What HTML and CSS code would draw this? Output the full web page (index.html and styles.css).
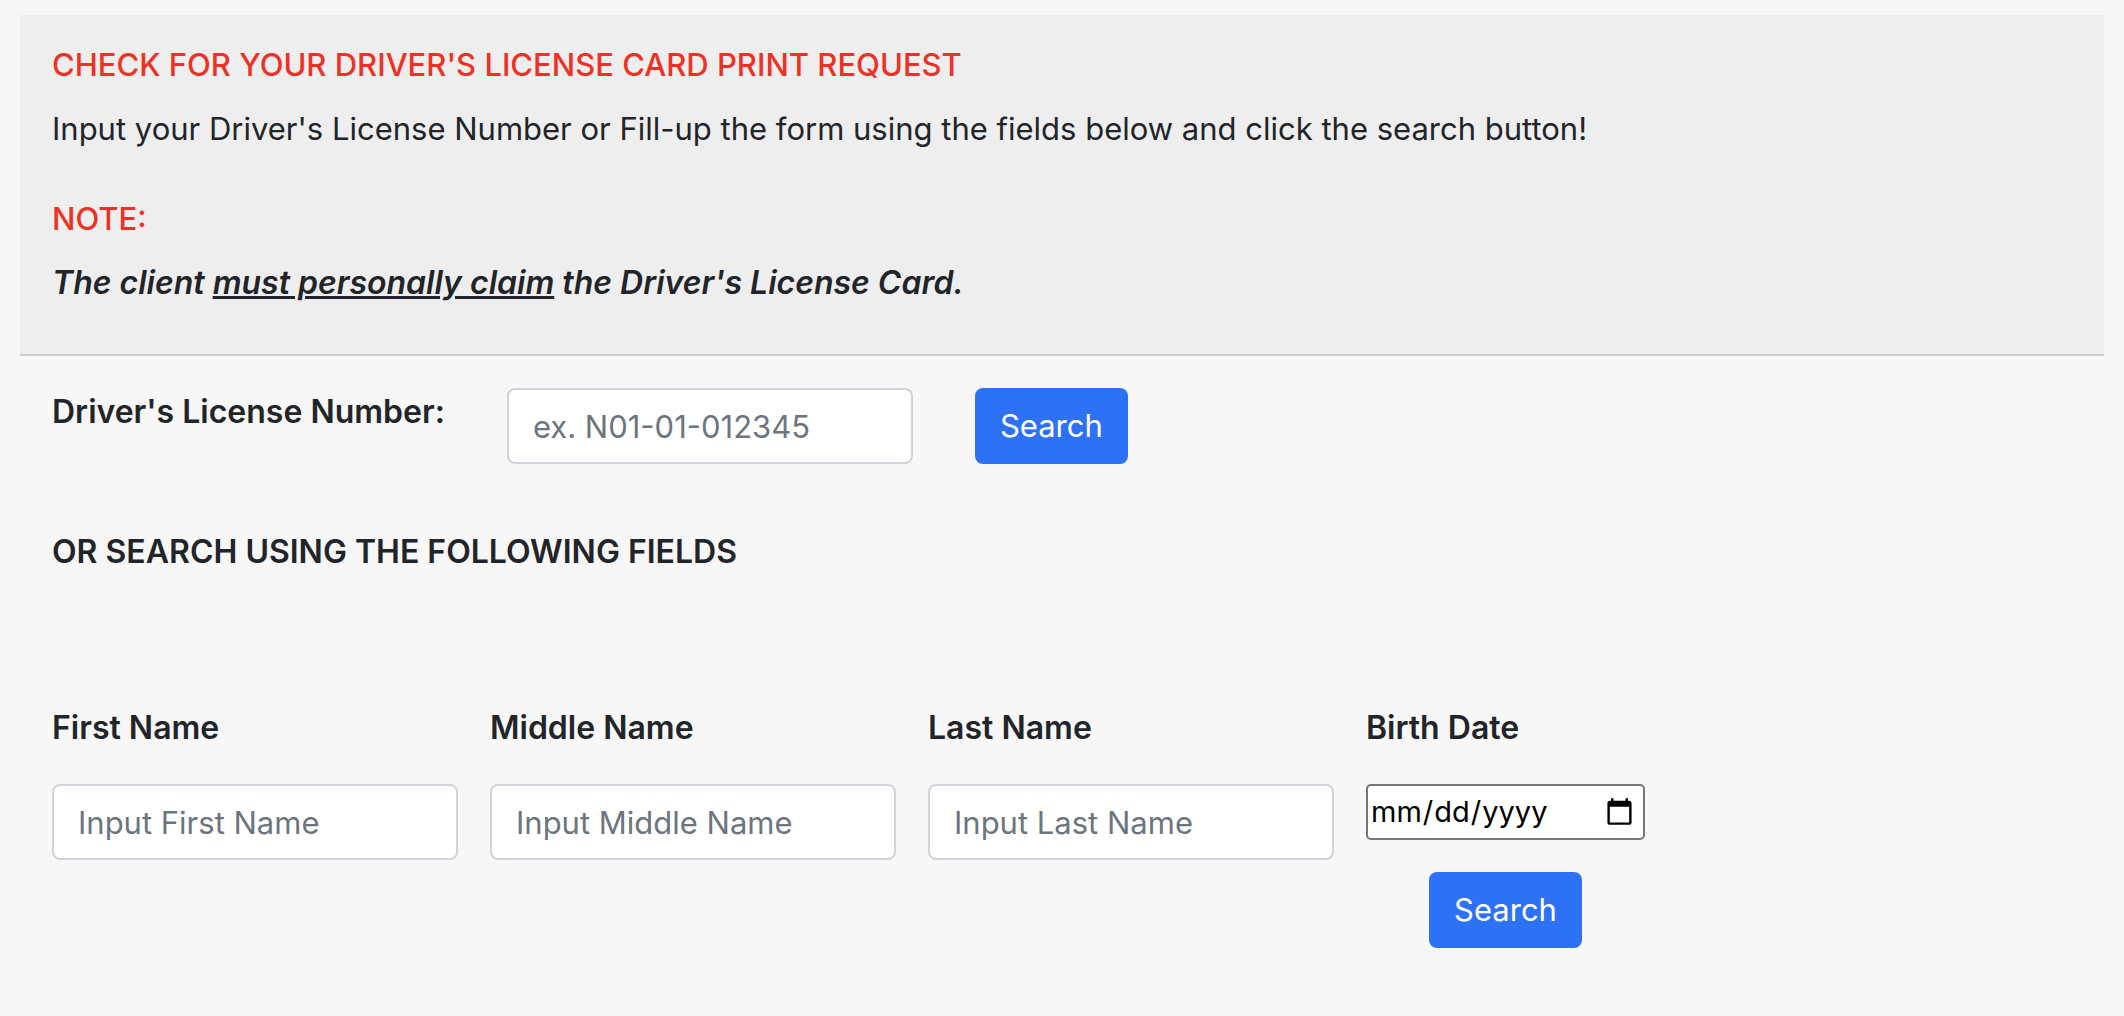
FILE: index.html
```html
<!DOCTYPE html>
<html lang="en">
<head>
    <meta charset="UTF-8">
    <meta name="viewport" content="width=device-width, initial-scale=1.0">
    <title>Driver's License Card Print Request</title>
    <link rel="stylesheet" href="styles.css">
</head>
<body>
    <div class="notice">
        <h1>CHECK FOR YOUR DRIVER'S LICENSE CARD PRINT REQUEST</h1>
        <p>Input your Driver's License Number or Fill-up the form using the fields below and click the search button!</p>
        <h2>NOTE:</h2>
        <p class="claim">The client <u>must personally claim</u> the Driver's License Card.</p>
    </div>

    <form class="license-form">
        <label for="licenseNumber">Driver's License Number:</label>
        <input type="text" class="text-input" id="licenseNumber" name="licenseNumber" placeholder="ex. N01-01-012345">
        <button type="submit">Search</button>
    </form>

    <h2 class="or-title">OR SEARCH USING THE FOLLOWING FIELDS</h2>

    <form class="name-form">
        <div class="field">
            <label for="firstName">First Name</label>
            <input type="text" class="text-input" id="firstName" name="firstName" placeholder="Input First Name">
        </div>
        <div class="field">
            <label for="middleName">Middle Name</label>
            <input type="text" class="text-input" id="middleName" name="middleName" placeholder="Input Middle Name">
        </div>
        <div class="field">
            <label for="lastName">Last Name</label>
            <input type="text" class="text-input" id="lastName" name="lastName" placeholder="Input Last Name">
        </div>
        <div class="field">
            <label for="birthDate">Birth Date</label>
            <input type="date" class="date-input" id="birthDate" name="birthDate">
            <button type="submit">Search</button>
        </div>
    </form>
</body>
</html>
```

FILE: styles.css
```css
* {
    box-sizing: border-box;
}
body {
    margin: 0;
    padding: 15px 20px 32px;
    background-color: #f7f7f7;
    color: #212529;
    font-family: Inter, "Liberation Sans", sans-serif;
    font-size: 31px;
    line-height: 48px;
}
h1, h2, p {
    margin: 0 0 16px;
    font-size: 31px;
}
.notice {
    padding: 26px 32px 31px;
    background-color: #eee;
    border-bottom: 2px solid #ccc;
}
.notice h1, .notice h2 {
    color: #ee3124;
    font-weight: 500;
}
.notice h2 {
    margin-top: 42px;
}
label, .claim, .or-title {
    font-size: 32px;
    font-weight: 600;
}
.claim {
    font-style: italic;
}
.claim u {
    text-decoration-thickness: 3px;
}
.license-form {
    display: flex;
    align-items: flex-start;
    gap: 62px;
    padding: 32px 32px 64px;
}
.text-input {
    width: 406px;
    height: 76px;
    padding: 12px 24px;
    border: 2px solid #ced4da;
    border-radius: 8px;
    background-color: #fff;
    color: #212529;
    font: inherit;
}
.text-input::placeholder {
    color: #6c757d;
    opacity: 1;
}
button {
    height: 76px;
    padding: 12px 25px;
    border: none;
    border-radius: 8px;
    background-color: #2d71f6;
    color: #fff;
    font: inherit;
    cursor: pointer;
}
button:hover {
    background-color: #1b5fe0;
}
.or-title {
    margin: 0 32px 128px;
}
.name-form {
    display: flex;
    flex-wrap: wrap;
    align-items: flex-start;
    gap: 32px;
    padding: 0 32px;
}
.field {
    display: flex;
    flex-direction: column;
    gap: 32px;
}
.field button {
    align-self: center;
}
.date-input {
    width: 279px;
    height: 56px;
    padding: 2px 6px 2px 2px;
    border: 2px solid #767676;
    border-radius: 5px;
    background-color: #fff;
    color: #000;
    font: inherit;
    font-size: 29px;
}
.date-input::-webkit-calendar-picker-indicator {
    width: 31px;
    height: 31px;
}
```
